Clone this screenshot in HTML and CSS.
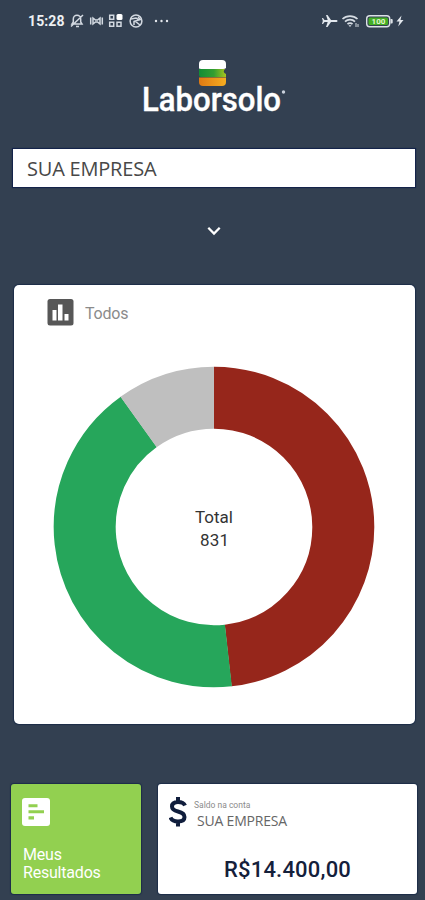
FILE: index.html
```html
<!DOCTYPE html>
<html lang="pt-BR">
<head>
<meta charset="utf-8">
<meta name="viewport" content="width=device-width, initial-scale=1">
<title>Laborsolo</title>
<link rel="stylesheet" href="styles.css">
</head>
<body>
<header class="status">
  <span class="time">15:28</span>
  <svg class="status-left" viewBox="0 0 104 18" width="104" height="18" fill="none" stroke="#d3d9e1" stroke-width="1.5">
    <path d="M3 12h10l-1.300-2V7a3.700 3.700 0 0 0-7.400 0v3zM7 14.500h3M2 14.500L14 3"/>
    <path d="M21.700 5.500v7M33.300 5.500v7M24 6l2.500 2h2L31 6v6l-2.500-2h-2L24 12z" stroke-width="1.500"/>
    <path d="M40.700 3.200h4v4h-4zM40.700 10.200h4v4h-4zM48 10.200h4v4h-4z"/>
    <rect x="47.500" y="2" width="6" height="6" rx="1.500" fill="#fff" stroke="none"/>
    <circle cx="67" cy="9" r="5.900"/>
    <path d="M62 7l5-1 3 2-4 1 5 4M65 9v4M69 5l3 3"/>
    <g fill="#e4e8ed" stroke="none"><circle cx="87" cy="9" r="1.200"/><circle cx="92.500" cy="9" r="1.200"/><circle cx="98" cy="9" r="1.200"/></g>
  </svg>
  <svg class="status-right" viewBox="0 0 84 18" width="84" height="18">
    <path d="M15.500 8H10L6.500 3H5L6.700 8H3.500L2 6H1l.8 3L1 12h1l1.500-2h3.200L5 15h1.500L10 10h5.500a1 1 0 0 0 0-2z" fill="#e3e8ee"/>
    <g fill="none" stroke="#d7dde4" stroke-width="1.700"><path d="M21.500 7a11 11 0 0 1 15 0M24 9.700a7 7 0 0 1 10 0M26.500 12.200a3.500 3.500 0 0 1 5 0"/><path d="M35 11v4M37 12v3" stroke-width="1"/></g>
    <path d="M27.500 13.200h3L29 15z" fill="#d7dde4"/>
    <rect x="45.700" y="3.700" width="23" height="11" rx="3" fill="#334051" stroke="#dde2e7" stroke-width="1.400"/>
    <rect x="47.500" y="5.400" width="19.500" height="7.600" rx="1.500" fill="#43ad25"/>
    <path d="M69.500 7h1.200q1 0 1 1v2.500q0 1-1 1h-1.200z" fill="#dde2e7"/>
    <text x="57.500" y="12" class="battery-text">100</text>
    <path d="M80.500 3.500l-5 6h3l-1.300 5 5.300-6.500h-3z" fill="#e3e8ee"/>
  </svg>
</header>

<div class="brand">
  <svg viewBox="0 0 150 70" width="150" height="70" role="img" aria-label="Laborsolo">
    <defs>
      <linearGradient id="leaf"><stop offset="0" stop-color="#128c35"/><stop offset=".55" stop-color="#339e31"/><stop offset="1" stop-color="#a8c51e"/></linearGradient>
      <linearGradient id="soil"><stop offset="0" stop-color="#df7913"/><stop offset="1" stop-color="#f6ad20"/></linearGradient>
    </defs>
    <path d="M59 10.500V6q0-4 4-4h19q4 0 4 4v4q-1 1-3 1H61z" fill="#fff"/>
    <path d="M59 11h26q-3 3 1 5v3H61q-2 0-2-2z" fill="url(#leaf)"/>
    <path d="M59 19.500h27v4.500q0 4-4 4H63q-4 0-4-4z" fill="url(#soil)"/>
    <text x="2" y="53.300" class="wordmark" textLength="139" lengthAdjust="spacingAndGlyphs">Laborsolo</text>
    <circle cx="143.500" cy="34" r="1.700" fill="#c9d1dc"/>
  </svg>
</div>

<div class="company">SUA EMPRESA</div>

<div class="expand">
  <svg viewBox="0 0 16 12" width="16" height="12"><path d="M2.300 2.800L8 8.500l5.700-5.700" fill="none" stroke="#fff" stroke-width="2.300"/></svg>
</div>

<main class="chart-card">
  <div class="chart-head">
    <svg viewBox="0 0 27 27" width="27" height="27"><rect x=".5" y="0" width="26" height="26.500" rx="2.500" fill="#575757"/><path d="M5.500 11h4v10.500h-4zM11 5.500h4.500v16H11zM17.500 15h4v6.500h-4z" fill="#fff"/></svg>
    <span>Todos</span>
  </div>
  <svg class="donut" viewBox="0 0 322 322" width="322" height="322">
    <g fill="none" stroke-width="62">
      <circle cx="161" cy="161" r="129.300" pathLength="360" stroke="#96261b" stroke-dasharray="173.700 186.300" transform="rotate(-90 161 161)"/>
      <circle cx="161" cy="161" r="129.300" pathLength="360" stroke="#26a65b" stroke-dasharray="150.800 209.200" transform="rotate(83.600 161 161)"/>
      <circle cx="161" cy="161" r="129.300" pathLength="360" stroke="#bfbfbf" stroke-dasharray="35.700 324.300" transform="rotate(234.300 161 161)"/>
    </g>
    <g class="donut-label"><text x="161" y="156.500" textLength="38">Total</text><text x="161.500" y="180" textLength="29">831</text></g>
  </svg>
</main>

<section class="tiles">
  <article class="results">
    <svg viewBox="0 0 28 28" width="28" height="28"><rect width="28" height="28" rx="3" fill="#fff"/><path d="M6.500 6.300h9v3h-9zM6.500 12.300H22v3H6.500zM6.500 18.200h5.500v3.300H6.500z" fill="#92d050"/></svg>
    <p>Meus<br>Resultados</p>
  </article>
  <article class="balance">
    <div class="balance-head">
      <svg viewBox="0 0 18 32" width="18" height="32"><path d="M16 9.500Q14.500 6 9 6 3 6 3 10.500q0 3.500 6 5 6.500 1.500 6.500 5.500 0 4.500-6.500 4.500-6 0-7.500-4M9 1v5M9 25v5.500" fill="none" stroke="#101d3c" stroke-width="4"/></svg>
      <div><div class="caption">Saldo na conta</div><div class="account">SUA EMPRESA</div></div>
    </div>
    <div class="amount">R$14.400,00</div>
  </article>
</section>
</body>
</html>
```
FILE: styles.css
```css
* { box-sizing: border-box; }
body {
  margin: 0;
  height: 900px;
  overflow: hidden;
  background: #334051;
  font-family: Roboto, sans-serif;
  display: flex;
  flex-direction: column;
}
.status {
  height: 42px;
  padding: 0 20px 0 28px;
  display: flex;
  align-items: center;
  flex: none;
}
.time {
  width: 41px;
  color: #edf0f3;
  font-size: 14px;
  font-weight: 700;
  letter-spacing: 0.1px;
}
.status-right { margin-left: auto; }
.battery-text {
  font: 700 8px Roboto, sans-serif;
  fill: #e4f7cd;
  text-anchor: middle;
}
.brand {
  height: 70px;
  margin: 16px 0 0 140px;
  flex: none;
}
.brand svg { display: block; }
.wordmark {
  font: 500 34px Roboto, sans-serif;
  fill: #fff;
  stroke: #fff;
  stroke-width: 0.4px;
  stroke-linejoin: round;
}
.company {
  height: 38px;
  margin: 21px 10px 0 13px;
  padding-left: 14px;
  background: #fff;
  box-shadow: 0 0 1px 1px #14234a;
  color: #484848;
  font: 20px/40px "Open Sans", sans-serif;
  letter-spacing: -0.2px;
  flex: none;
}
.expand {
  height: 98px;
  padding: 38px 0 0 206px;
  flex: none;
}
.expand svg { display: block; }
.chart-card {
  height: 439px;
  margin: 0 10px 0 14px;
  background: #fff;
  border-radius: 5px;
  box-shadow: 0 0 1px 1px #1c2d48;
  flex: none;
}
.chart-head {
  height: 81px;
  padding: 14px 0 0 33px;
  display: flex;
  align-items: flex-start;
  gap: 11px;
  color: #8b8b8b;
  font-size: 16px;
  line-height: 30px;
  letter-spacing: -0.2px;
}
.donut {
  display: block;
  margin-left: 39px;
}
.donut-label {
  font: 17px Roboto, sans-serif;
  fill: #333;
  text-anchor: middle;
}
.tiles {
  height: 110px;
  margin: 60px 8px 0 11px;
  display: grid;
  grid-template-columns: 130px 259px;
  gap: 17px;
  flex: none;
}
.results, .balance {
  border-radius: 3px;
  box-shadow: 0 0 1px 1px #1c2d48;
}
.results {
  padding: 14px 11px 0;
  background: #92d050;
  color: #fff;
}
.results svg { display: block; }
.results p {
  margin: 20px 0 0 1px;
  font-size: 16px;
  line-height: 18px;
  letter-spacing: -0.2px;
}
.balance {
  padding-top: 12px;
  background: #fff;
}
.balance-head {
  height: 54px;
  padding-left: 11px;
  display: flex;
  gap: 7px;
}
.caption {
  margin-top: 4px;
  color: #8c8c8c;
  font-size: 8.500px;
  line-height: 11px;
}
.account {
  margin-left: 3px;
  color: #666;
  font: 14px/20px "Open Sans", sans-serif;
  letter-spacing: -0.2px;
}
.amount {
  color: #14203b;
  font-size: 22px;
  font-weight: 500;
  line-height: 40px;
  letter-spacing: 0.2px;
  text-align: center;
}
```
